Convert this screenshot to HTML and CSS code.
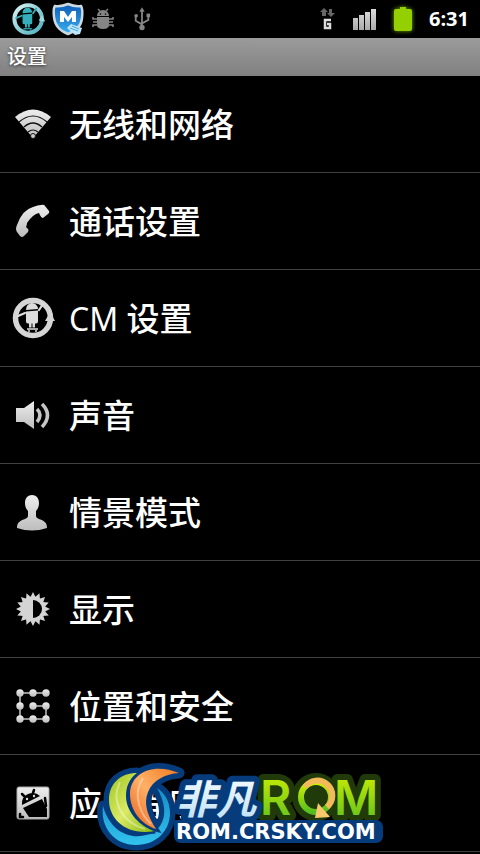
FILE: index.html
```html
<!DOCTYPE html>
<html lang="zh-CN">
<head>
<meta charset="utf-8">
<meta name="viewport" content="width=device-width, initial-scale=1">
<title>设置</title>
<link rel="stylesheet" href="styles.css">
</head>
<body>
<svg class="defs" width="0" height="0" aria-hidden="true">
  <defs>
    <linearGradient id="silver" x1="0" y1="0" x2="0" y2="1"><stop offset="0" stop-color="#eee"/><stop offset="1" stop-color="#bdbdbd"/></linearGradient>
    <linearGradient id="signal" x1="0" y1="0" x2="0" y2="1"><stop offset="0" stop-color="#ddd"/><stop offset="1" stop-color="#aaa"/></linearGradient>
    <linearGradient id="cyan" x1="0" y1="0" x2="1" y2="1"><stop offset="0" stop-color="#d8f4f6"/><stop offset=".5" stop-color="#8fcfd8"/><stop offset="1" stop-color="#4fb0bf"/></linearGradient>
    <linearGradient id="shield" x1="0" y1="0" x2="0" y2="1"><stop offset="0" stop-color="#0d5cb8"/><stop offset="1" stop-color="#3bb0f0"/></linearGradient>
    <g id="skater">
      <path d="M13 14a5.500 6 0 0 1 12-1z"/>
      <path d="M13 15.500l12-1v11a2 2 0 0 1-2 2h-1v4h-2.500v-4h-1v4H16v-4h-1a2 2 0 0 1-2-2z"/>
      <path d="M12 17L5 20M26 14l4-6" fill="none" stroke="currentColor" stroke-width="2.200" stroke-linecap="round"/>
      <path d="M14 33h11" fill="none" stroke="currentColor" stroke-width="1.500"/><circle cx="16" cy="35" r="1"/><circle cx="23" cy="35" r="1"/>
    </g>
  </defs>
</svg>
<div class="screen">
  <header class="status">
    <div class="notices">
      <svg class="i32" viewBox="0 0 42 42" role="img" aria-label="CyanogenMod"><circle cx="20" cy="21" r="17" fill="none" stroke="url(#cyan)" stroke-width="5"/><path d="M41 24l-8-1 4-7z" fill="#9edbe2"/><g fill="#35aebb" color="#35aebb"><use href="#skater"/></g></svg>
      <svg class="i32" viewBox="0 0 32 34" role="img" aria-label="M"><path d="M3 4Q9 5 16 2q7 3 13 2 2 3 1 12-1 11-14 16Q3 27 2 15 1 6 3 4z" fill="url(#shield)" stroke="#cdd9e0" stroke-width="2.500"/><path d="M8 20V9h4l4 6 4-6h4v11h-4v-5l-4 5-4-5v5z" fill="#fff"/><path d="M15 26l4-4 11 4-2 6-5 1z" fill="#bde6fb"/><path d="M18 26l8 3M20 24l7 3" stroke="#4ba5d8"/></svg>
      <svg class="i22" viewBox="0 0 22 22" role="img" aria-label="调试"><g fill="#858585"><path d="M5 8a6 6 0 0 1 12 0z"/><path d="M5 9h12v8q0 4-6 4t-6-4z"/></g><path d="M8 3L6 1M14 3l2-2M5 11H1V9M17 11h4V9M5 14H1M17 14h4M5 17H1v2M17 17h4v2" fill="none" stroke="#858585" stroke-width="1.500"/><circle cx="8.500" cy="6" r=".8"/><circle cx="13.500" cy="6" r=".8"/></svg>
      <svg class="i26" viewBox="0 0 20 26" role="img" aria-label="USB"><path d="M10 22V3M10 19l-7-4V9M10 18l7-4V9" fill="none" stroke="#858585" stroke-width="2"/><path d="M10 0l3 5H7z" fill="#858585"/><circle cx="10" cy="22.500" r="3" fill="#858585"/><circle cx="3.500" cy="9.500" r="2" fill="#858585"/><path d="M15 7h4v4h-4z" fill="#858585"/></svg>
    </div>
    <div class="system">
      <svg class="data" viewBox="0 0 16 22" role="img" aria-label="G"><path d="M4 0l4 4H6v4H2V4H0zM9 1h3v4h3l-4 4-4-4h2z" fill="#666"/><path d="M11 12H5v8h5v-4H7" fill="none" stroke="#ddd" stroke-width="2.500"/></svg>
      <svg class="signal" viewBox="0 0 24 22" role="img" aria-label="信号"><path d="M0 10h5v12H0zM6 7h5v15H6zM12 4h5v18h-5zM18 1h5v21h-5z" fill="url(#signal)"/></svg>
      <svg class="battery" viewBox="0 0 18 24" role="img" aria-label="电池"><path d="M6 0h6v2h4q2 0 2 2v18q0 2-2 2H2q-2 0-2-2V4q0-2 2-2h4z" fill="#94cf00"/></svg>
      <time>6:31</time>
    </div>
  </header>
  <h1 class="title">设置</h1>
  <nav>
    <ul class="list">
      <li><a href="#wireless"><svg class="icon" viewBox="0 0 46 46" aria-hidden="true"><path d="M5 15Q23 0 41 15L23 36z" fill="url(#silver)"/><path d="M9 20q14-12 28 0M14 25q9-8 18 0M18 30q5-4 10 0" fill="none" stroke="#111" stroke-width="1.200"/><circle cx="23" cy="34" r="2.500" fill="#ccc" stroke="#111"/></svg>无线和网络</a></li>
      <li><a href="#call"><svg class="icon" viewBox="0 0 46 46" aria-hidden="true"><path d="M31 6q3-1 4 1l4 5q1 2-1 3l-5 4q-2 0-4-5-6 1-12 10 0 2-1 4l2 2q1 1 0 3l-4 4q-2 2-4 0l-3-4q-2-3 0-7Q12 11 23 8q5-2 8-2z" fill="url(#silver)"/></svg>通话设置</a></li>
      <li><a href="#cm"><svg class="icon" viewBox="0 0 46 46" aria-hidden="true"><circle cx="23" cy="22" r="17.500" fill="none" stroke="#d6d6d6" stroke-width="5.500"/><path d="M45 25H35l5-9z" fill="#d6d6d6"/><g transform="translate(3 0)" fill="#ddd" color="#ddd"><use href="#skater"/></g></svg><span><span class="latin">CM </span>设置</span></a></li>
      <li><a href="#sound"><svg class="icon" viewBox="0 0 46 46" aria-hidden="true"><path d="M6 15h8l10-7v28l-10-7H6z" fill="url(#silver)"/><path d="M27 16q6 6 0 13M32 11q11 11 0 23" fill="none" stroke="#c5c5c5" stroke-width="3.500"/></svg>声音</a></li>
      <li><a href="#profiles"><svg class="icon" viewBox="0 0 46 46" aria-hidden="true"><path d="M22 5c5 0 7 4 7 8 0 3-1 6-3 8v5q0 2 3 3c6 2 8 4 8 9q-15 5-30 0c0-5 2-7 8-9q3-1 3-3v-5c-2-2-3-5-3-8 0-4 2-8 7-8z" fill="url(#silver)"/></svg>情景模式</a></li>
      <li><a href="#display"><svg class="icon" viewBox="0 0 46 46" aria-hidden="true"><circle cx="23" cy="22" r="12.500" fill="#d4d4d4"/><g fill="#d4d4d4"><path id="rays" d="M23 5l3 6h-6zM23 39l3-6h-6zM6 22l6-3v6zM40 22l-6-3v6z"/><use href="#rays" transform="rotate(22.500 23 22)"/><use href="#rays" transform="rotate(45 23 22)"/><use href="#rays" transform="rotate(67.500 23 22)"/></g><path d="M23 13a9 9 0 0 1 0 18z"/></svg>显示</a></li>
      <li><a href="#security"><svg class="icon" viewBox="0 1 46 46" aria-hidden="true"><path d="M36 10H10v26h26V23H23" fill="none" stroke="#c4c4c4" stroke-width="1.500"/><g fill="url(#silver)"><circle cx="10" cy="10" r="3.700"/><circle cx="23" cy="10" r="3.700"/><circle cx="36" cy="10" r="3.700"/><circle cx="10" cy="23" r="3.700"/><circle cx="23" cy="23" r="3.700"/><circle cx="36" cy="23" r="3.700"/><circle cx="10" cy="36" r="3.700"/><circle cx="23" cy="36" r="3.700"/><circle cx="36" cy="36" r="3.700"/></g></svg>位置和安全</a></li>
      <li><a href="#apps"><svg class="icon" viewBox="0 1 46 46" aria-hidden="true"><rect x="7" y="7" width="32" height="32" rx="2" fill="url(#silver)" stroke="#aaa"/><path d="M12 25q-1-8 6-11 7-3 12 2z"/><path d="M13 28l19-9 5 10v8H19z"/><path d="M14 16l-2-2M23 13l1-3M35 18l1 8M10 34v3h3" stroke="#000" stroke-width="2.500" stroke-linecap="round" fill="none"/><circle cx="17" cy="19" r="1.200" fill="#ddd"/><circle cx="24" cy="16" r="1.200" fill="#ddd"/></svg>应用程序</a></li>
    </ul>
  </nav>
  <svg class="watermark" viewBox="0 0 290 96" role="img" aria-label="非凡ROM ROM.CRSKY.COM">
    <defs>
      <linearGradient id="leaf" x1="0" y1="0" x2="1" y2="1"><stop offset="0" stop-color="#9cc51d"/><stop offset=".5" stop-color="#dbea65"/><stop offset="1" stop-color="#84b80d"/></linearGradient>
      <linearGradient id="flame" x1="1" y1="0" x2="0" y2="1"><stop offset="0" stop-color="#ef7a20"/><stop offset=".5" stop-color="#ffb066"/><stop offset="1" stop-color="#e8601a"/></linearGradient>
      <linearGradient id="water" x1="0" y1="0" x2="0" y2="1"><stop offset="0" stop-color="#158cc8"/><stop offset="1" stop-color="#32c2ee"/></linearGradient>
      <linearGradient id="ice" x1="0" y1="0" x2="0" y2="1"><stop offset="0" stop-color="#fff"/><stop offset="1" stop-color="#b9def5"/></linearGradient>
      <linearGradient id="lime" x1="0" y1="0" x2="0" y2="1"><stop offset="0" stop-color="#d5f000"/><stop offset="1" stop-color="#55bd20"/></linearGradient>
      <path id="ring" d="M8 48C5 70 20 87 41 87 62 87 75 72 75 55 75 44 70 35 62 30 70 44 72 58 65 68 52 84 18 84 8 48z"/>
      <path id="crescent" d="M42 15C26 15 14 25 14 42 14 62 32 78 60 73 46 69 31 55 31 38 31 29 34 21 42 15z"/>
      <path id="swoosh" d="M84 15C58 4 35 15 35 36 35 54 48 67 61 71 53 58 48 46 53 34 58 22 70 16 84 15z"/>
    </defs>
    <g class="badge-edge"><use href="#ring"/><use href="#crescent"/><use href="#swoosh"/></g>
    <use href="#ring" fill="url(#water)"/>
    <g class="badge-gap"><use href="#crescent" fill="url(#leaf)"/><use href="#swoosh" fill="url(#flame)"/></g>
    <path d="M25 24C15 44 28 65 50 71M48 20C36 38 47 58 56 66" fill="none" stroke="#fff" stroke-opacity=".35" stroke-width="2"/>
    <circle cx="221" cy="39" r="24" fill="#203b09"/>
    <text class="rom" x="165" y="57">R</text>
    <text class="rom" x="239" y="57">M</text>
    <circle cx="221" cy="39" r="15" fill="#203b09" stroke="url(#lime)" stroke-width="6"/>
    <path d="M210 29a15 15 0 1 1 22 20" fill="none" stroke="#f3b95a" stroke-width="6"/><path d="M223 45l12 14-15 1z" fill="#f9c76e"/>
    <path d="M86 62V30h50l22 24v8H281a7 7 0 0 1 7 7V78a7 7 0 0 1-7 7H86a7 7 0 0 1-7-7V62z" fill="#063c7c"/>
    <text class="brand" x="81" y="56">非凡</text>
    <text class="domain" x="81" y="81">ROM.CRSKY.COM</text>
  </svg>
</div>
</body>
</html>
```
FILE: styles.css
```css
* { box-sizing: border-box; }
body { margin: 0; background: #000; color: #fff; font-family: "Open Sans", "Noto Sans CJK SC", sans-serif; }
.defs { position: absolute; }
.screen { position: relative; min-height: 100vh; overflow: hidden; }
.status { height: 38px; display: flex; justify-content: space-between; align-items: center; padding: 0 11px 0 12px; }
.notices, .system { display: flex; align-items: center; }
.notices { gap: 5px; }
.i32 { width: 34px; height: 34px; }
.i22 { width: 22px; height: 22px; margin: 0 14px 0 2px; }
.i26 { width: 18px; height: 26px; }
.system { gap: 17px; }
.data { width: 16px; height: 22px; }
.signal { width: 24px; height: 22px; }
.battery { width: 18px; height: 24px; filter: drop-shadow(0 0 2px #79ad00); }
time { font-size: 20px; line-height: 24px; font-weight: 700; }
.title { margin: 0; height: 38px; padding: 0 7px; background: linear-gradient(#9b9b9b, #808080); font-size: 20px; line-height: 38px; font-weight: 500; text-shadow: 0 1px 3px #333; }
.list { margin: 0; padding: 0; list-style: none; }
.list li { border-bottom: 1px solid #404040; }
.list a { display: flex; align-items: center; gap: 13px; height: 96px; padding: 2px 10px 0; color: inherit; text-decoration: none; font-size: 33px; line-height: 44px; font-weight: 500; }
.latin { font-family: "Noto Sans", sans-serif; font-size: 32px; font-weight: 400; }
.icon { width: 46px; height: 46px; flex: none; }
.watermark { position: absolute; left: 50%; bottom: 0; width: 290px; height: 96px; transform: translateX(-50%); }
.badge-edge { fill: #063c7c; stroke: #063c7c; stroke-width: 11px; stroke-linejoin: round; }
.badge-gap { stroke: #063c7c; stroke-width: 5px; paint-order: stroke; }
.brand { font: italic 700 40px "Noto Sans CJK SC", sans-serif; fill: url(#ice); stroke: #063c7c; stroke-width: 12px; stroke-linejoin: round; paint-order: stroke; }
.rom { font: 600 48px Inter, sans-serif; fill: url(#lime); stroke: #203b09; stroke-width: 12px; stroke-linejoin: round; paint-order: stroke; }
.domain { font: 700 21px "DejaVu Sans", sans-serif; fill: #fff; }
```
